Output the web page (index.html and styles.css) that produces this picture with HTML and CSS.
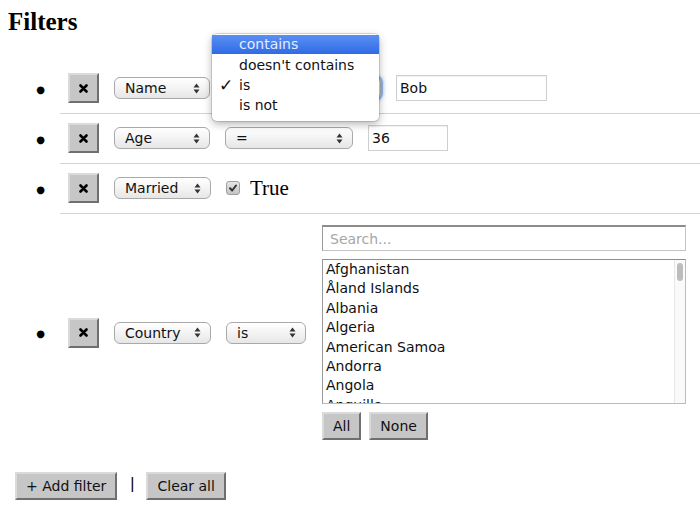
FILE: index.html
```html
<!DOCTYPE html>
<html>
<head>
<meta charset="utf-8">
<title>Filters</title>
<link rel="stylesheet" href="styles.css">
</head>
<body>
<h1 class="title">Filters</h1>
<ul class="filters">
  <li class="row">
    <div class="row-inner">
      <button class="btn remove" type="button"><svg width="9" height="9" viewBox="0 0 9 9"><path d="M1.5 1.5 L7.5 7.5 M7.5 1.5 L1.5 7.5" stroke="#000" stroke-width="2.6" stroke-linecap="round"/></svg></button>
      <div class="select w96"><span class="sel-text">Name</span><svg class="arrows" width="7" height="11" viewBox="0 0 7 11"><path d="M0.5 4.5 L3.5 0.5 L6.5 4.5 Z M0.5 6.5 L3.5 10.5 L6.5 6.5 Z" fill="#333"/></svg></div>
      <div class="menu-anchor">
        <div class="select w156 focused"><span class="sel-text">is</span><svg class="arrows" width="7" height="11" viewBox="0 0 7 11"><path d="M0.5 4.5 L3.5 0.5 L6.5 4.5 Z M0.5 6.5 L3.5 10.5 L6.5 6.5 Z" fill="#333"/></svg></div>
        <div class="menu">
          <div class="menu-item active"><span class="check"></span>contains</div>
          <div class="menu-item"><span class="check"></span>doesn't contains</div>
          <div class="menu-item"><span class="check">✓</span>is</div>
          <div class="menu-item"><span class="check"></span>is not</div>
        </div>
      </div>
      <input class="text-input w151" type="text" value="Bob">
    </div>
  </li>
  <li class="row">
    <div class="row-inner">
      <button class="btn remove" type="button"><svg width="9" height="9" viewBox="0 0 9 9"><path d="M1.5 1.5 L7.5 7.5 M7.5 1.5 L1.5 7.5" stroke="#000" stroke-width="2.6" stroke-linecap="round"/></svg></button>
      <div class="select w96"><span class="sel-text">Age</span><svg class="arrows" width="7" height="11" viewBox="0 0 7 11"><path d="M0.5 4.5 L3.5 0.5 L6.5 4.5 Z M0.5 6.5 L3.5 10.5 L6.5 6.5 Z" fill="#333"/></svg></div>
      <div class="select w128"><span class="sel-text">=</span><svg class="arrows" width="7" height="11" viewBox="0 0 7 11"><path d="M0.5 4.5 L3.5 0.5 L6.5 4.5 Z M0.5 6.5 L3.5 10.5 L6.5 6.5 Z" fill="#333"/></svg></div>
      <input class="text-input w80" type="text" value="36">
    </div>
  </li>
  <li class="row">
    <div class="row-inner">
      <button class="btn remove" type="button"><svg width="9" height="9" viewBox="0 0 9 9"><path d="M1.5 1.5 L7.5 7.5 M7.5 1.5 L1.5 7.5" stroke="#000" stroke-width="2.6" stroke-linecap="round"/></svg></button>
      <div class="select w97"><span class="sel-text">Married</span><svg class="arrows" width="7" height="11" viewBox="0 0 7 11"><path d="M0.5 4.5 L3.5 0.5 L6.5 4.5 Z M0.5 6.5 L3.5 10.5 L6.5 6.5 Z" fill="#333"/></svg></div>
      <label class="bool">
        <span class="checkbox"><svg width="10" height="10" viewBox="0 0 10 10"><path d="M2 5.2 L4.2 7.5 L8 2.5" stroke="#333" stroke-width="2" fill="none" stroke-linecap="round" stroke-linejoin="round"/></svg></span>
        <span class="bool-text">True</span>
      </label>
    </div>
  </li>
  <li class="row last">
    <div class="row-inner">
      <button class="btn remove" type="button"><svg width="9" height="9" viewBox="0 0 9 9"><path d="M1.5 1.5 L7.5 7.5 M7.5 1.5 L1.5 7.5" stroke="#000" stroke-width="2.6" stroke-linecap="round"/></svg></button>
      <div class="select w97"><span class="sel-text">Country</span><svg class="arrows" width="7" height="11" viewBox="0 0 7 11"><path d="M0.5 4.5 L3.5 0.5 L6.5 4.5 Z M0.5 6.5 L3.5 10.5 L6.5 6.5 Z" fill="#333"/></svg></div>
      <div class="select w80"><span class="sel-text">is</span><svg class="arrows" width="7" height="11" viewBox="0 0 7 11"><path d="M0.5 4.5 L3.5 0.5 L6.5 4.5 Z M0.5 6.5 L3.5 10.5 L6.5 6.5 Z" fill="#333"/></svg></div>
      <div class="picker">
        <input class="search" type="text" placeholder="Search...">
        <div class="listbox">
          <div class="list-items">
            <div class="list-item">Afghanistan</div>
            <div class="list-item">Åland Islands</div>
            <div class="list-item">Albania</div>
            <div class="list-item">Algeria</div>
            <div class="list-item">American Samoa</div>
            <div class="list-item">Andorra</div>
            <div class="list-item">Angola</div>
            <div class="list-item">Anguilla</div>
          </div>
          <div class="scrollbar"><div class="thumb"></div></div>
        </div>
        <div class="picker-actions">
          <button class="btn" type="button">All</button>
          <button class="btn" type="button">None</button>
        </div>
      </div>
    </div>
  </li>
</ul>
<div class="footer">
  <button class="btn" type="button">+ Add filter</button>
  <span class="divider">|</span>
  <button class="btn" type="button">Clear all</button>
</div>
</body>
</html>
```

FILE: styles.css
```css
html, body {
  background: #fff;
}
body {
  margin: 0;
  padding: 8px;
  font-family: "Liberation Serif", serif;
  color: #000;
}
.title {
  margin: 0;
  font: bold 25px/28px "Liberation Serif", serif;
}
.filters {
  margin: 28px -8px 0 0;
  padding: 0 0 0 52px;
  font-size: 16px;
}
.row::marker {
  content: "\25CF\2003\2002";
  font-family: "DejaVu Sans", sans-serif;
  font-size: 10px;
}
.row {
  padding: 9px 0 10px 8px;
  border-bottom: 1px solid #d2d2d2;
}
.row.last {
  border-bottom: none;
  padding-top: 11px;
}
.row-inner {
  display: flex;
  align-items: center;
  gap: 15px;
  font-family: "DejaVu Sans", sans-serif;
  font-size: 14px;
}
.btn {
  box-sizing: border-box;
  height: 28px;
  padding: 0 9px;
  margin: 0;
  background: #c6c6c6;
  border: 2px solid;
  border-color: #dadada #6f6f6f #6f6f6f #dadada;
  border-radius: 0;
  font-family: "DejaVu Sans", sans-serif;
  font-size: 14px;
  color: #111;
}
.btn.remove {
  width: 31px;
  height: 30px;
  padding: 0;
  display: flex;
  align-items: center;
  justify-content: center;
}
.select {
  box-sizing: border-box;
  height: 22px;
  display: flex;
  align-items: center;
  justify-content: space-between;
  padding: 0 9px 0 10px;
  border: 1px solid #a9a9a9;
  border-radius: 6px;
  background: linear-gradient(#ffffff, #f1f1f1 60%, #e6e6e6);
  color: #111;
  line-height: 20px;
}
.select.focused {
  box-shadow: 0 0 0 2px #8fb3e6, 0 0 3px 3px rgba(90, 140, 220, 0.35);
}
.w80 { width: 80px; }
.w96 { width: 96px; }
.w97 { width: 97px; }
.w128 { width: 128px; }
.w151 { width: 151px; }
.w156 { width: 156px; }
.menu-anchor {
  position: relative;
}
.menu {
  position: absolute;
  left: -13px;
  top: -43px;
  width: 167px;
  box-sizing: border-box;
  padding: 1px 0 6px;
  background: #fff;
  border-radius: 5px;
  box-shadow: 0 0 0 1px rgba(0, 0, 0, 0.12), 0 3px 9px rgba(0, 0, 0, 0.3);
  z-index: 10;
}
.menu-item {
  display: flex;
  height: 20px;
  line-height: 20px;
  padding-left: 7px;
  color: #111;
  white-space: nowrap;
}
.menu-item.active {
  background: linear-gradient(#5b8ff2, #2f6be6);
  color: #e4edff;
  height: 19px;
  line-height: 19px;
  margin-bottom: 1px;
}
.check {
  width: 20px;
  flex: none;
  font-size: 17px;
}
.text-input {
  box-sizing: border-box;
  height: 26px;
  margin: 0;
  padding: 0 3px;
  border: 1px solid #cfcfcf;
  box-shadow: inset 0 1px 1px rgba(0, 0, 0, 0.06);
  font-family: "DejaVu Sans", sans-serif;
  font-size: 14px;
  color: #111;
  outline: none;
}
.bool {
  display: flex;
  align-items: center;
  gap: 10px;
}
.checkbox {
  box-sizing: border-box;
  width: 14px;
  height: 14px;
  border: 1px solid #a0a0a0;
  border-radius: 3px;
  background: linear-gradient(#e6e6e6, #c4c4c4);
  display: flex;
  align-items: center;
  justify-content: center;
}
.bool-text {
  font-family: "Liberation Serif", serif;
  font-size: 21px;
  line-height: 24px;
}
.picker {
  display: flex;
  flex-direction: column;
  align-items: flex-start;
  gap: 8px;
  margin-left: 1px;
}
.search {
  box-sizing: border-box;
  width: 364px;
  height: 26px;
  margin: 0;
  padding: 0 7px;
  border: 1px solid #c4c4c4;
  border-top: 2px solid #8c8c8c;
  border-left-color: #9a9a9a;
  font-family: "DejaVu Sans", sans-serif;
  font-size: 14px;
  outline: none;
}
.search::placeholder {
  color: #a6a6a6;
}
.listbox {
  box-sizing: border-box;
  width: 364px;
  height: 145px;
  display: flex;
  border: 1px solid #bcbcbc;
  border-top-color: #8e8e8e;
  border-left-color: #9a9a9a;
  overflow: hidden;
}
.list-items {
  flex: 1;
  padding-left: 3px;
  overflow: hidden;
  color: #111;
}
.list-item {
  height: 19.4px;
  line-height: 19.4px;
  white-space: nowrap;
}
.scrollbar {
  width: 11px;
  flex: none;
  border-left: 1px solid #e8e8e8;
  background: #fafafa;
  padding-top: 3px;
  box-sizing: border-box;
}
.thumb {
  width: 6px;
  height: 18px;
  margin-left: 2px;
  border-radius: 3px;
  background: #bdbdbd;
}
.picker-actions {
  display: flex;
  gap: 8px;
}
.footer {
  display: flex;
  align-items: center;
  margin-top: 22px;
  padding-left: 7px;
}
.divider {
  margin: 0 12px 0 13px;
  font-family: "Liberation Sans", sans-serif;
  font-size: 16px;
  color: #000;
  position: relative;
  top: -2px;
}
```
